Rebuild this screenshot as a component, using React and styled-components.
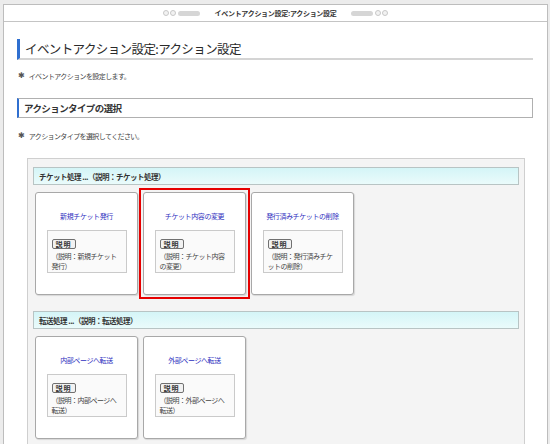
import React from 'react';
import styled, { createGlobalStyle } from 'styled-components';

const GlobalStyle = createGlobalStyle`
  html, body {
    margin: 0;
    padding: 0;
    background: #ececec;
    overflow: hidden;
  }
  body {
    font-family: "Noto Sans CJK JP", "Noto Sans", sans-serif;
    color: #333;
  }
`;

const Frame = styled.div`
  margin: 4px 0 0 3px;
  width: 543px;
  height: 460px;
  background: #fff;
  border: 1px solid #bdbdbd;
`;

const TopBar = styled.div`
  height: 16px;
  border-bottom: 1px solid #c4c4c4;
  display: flex;
  align-items: center;
  justify-content: center;
  gap: 14px;
`;

const TopTitle = styled.span`
  font-size: 7px;
  font-weight: 700;
  letter-spacing: -0.3px;
  color: #333;
`;

const Deco = styled.span`
  display: flex;
  align-items: center;
  gap: 1px;
  flex-direction: ${p => (p.$flip ? 'row-reverse' : 'row')};
`;

const Dot = styled.i`
  width: 4px;
  height: 4px;
  border-radius: 50%;
  border: 1px solid #c8c8c8;
  background: #f2f2f2;
`;

const Pill = styled.i`
  width: 22px;
  height: 5px;
  border-radius: 3px;
  background: #d6d6d6;
  margin: 0 1px;
`;

const Content = styled.div`
  padding: 0 14px 0 13px;
`;

const Heading = styled.h1`
  margin: 17px 0 0;
  height: 19px;
  display: flex;
  align-items: center;
  padding-left: 5px;
  border-left: 3px solid #2f6fd0;
  border-bottom: 2px solid #d4d4d4;
  font-size: 12.5px;
  font-weight: 400;
  letter-spacing: -0.6px;
  color: #2a2a2a;
`;

const Note = styled.p`
  margin: ${p => p.$top}px 0 0 1px;
  height: 10px;
  line-height: 10px;
  font-size: 7px;
  letter-spacing: -0.6px;
  color: #444;
  display: flex;
  align-items: center;
  gap: 4px;
`;

const Mark = styled.span`
  font-family: "DejaVu Sans", sans-serif;
  font-size: 8px;
  color: #555;
  letter-spacing: 0;
`;

const SectionBox = styled.div`
  margin-top: 17px;
  height: 18px;
  display: flex;
  align-items: center;
  padding-left: 5px;
  border: 1px solid #b0b0b0;
  border-left: 2px solid #2f6fd0;
  font-size: 9.5px;
  font-weight: 700;
  letter-spacing: -0.6px;
  color: #333;
`;

const Panel = styled.div`
  margin: 17px 8px 0 10px;
  padding: 8px 5px 30px;
  background: #f4f4f4;
  border: 1px solid #cfcfcf;
`;

const GroupHeader = styled.div`
  margin-top: ${p => p.$top}px;
  height: 16px;
  display: flex;
  align-items: center;
  padding-left: 5px;
  background: linear-gradient(#d4f5f7, #eafbfb);
  border: 1px solid #b8c4c4;
  font-size: 7.5px;
  font-weight: 700;
  letter-spacing: -0.5px;
  color: #333;
`;

const CardRow = styled.div`
  display: flex;
  gap: 5px;
  margin-top: 7px;
  padding-left: 2px;
`;

const Card = styled.div`
  position: relative;
  width: 101px;
  height: 101px;
  background: #fff;
  border: 1px solid #a8a8a8;
  border-radius: 3px;
  box-shadow: 1px 1px 1px rgba(0, 0, 0, 0.12);
  display: flex;
  flex-direction: column;
  align-items: center;

  &::after {
    content: '';
    display: ${p => (p.$selected ? 'block' : 'none')};
    position: absolute;
    inset: -5px;
    border: 2px solid #e60000;
    pointer-events: none;
  }
`;

const CardTitle = styled.div`
  margin-top: 18px;
  height: 10px;
  line-height: 10px;
  font-size: 7px;
  letter-spacing: -0.4px;
  color: #3030c0;
  white-space: nowrap;
`;

const DescBox = styled.div`
  margin-top: 9px;
  width: 80px;
  height: 43px;
  box-sizing: border-box;
  padding: 8px 3px 0 4px;
  background: #fafafa;
  border: 1px solid #cacaca;
  display: flex;
  flex-direction: column;
  align-items: flex-start;
`;

const DescButton = styled.span`
  display: flex;
  align-items: center;
  justify-content: center;
  width: 22px;
  height: 8px;
  border: 1px solid #707070;
  border-radius: 2px;
  background: #f2f2f2;
  font-size: 7px;
  line-height: 8px;
  font-weight: 700;
  letter-spacing: 1px;
  color: #333;
`;

const DescText = styled.div`
  margin-top: 2px;
  line-height: 10px;
  font-size: 7px;
  letter-spacing: -0.5px;
  color: #444;
`;

const groups = [
  {
    title: 'チケット処理 ...（説明：チケット処理）',
    items: [
      { name: '新規チケット発行', desc: '（説明：新規チケット発行）' },
      { name: 'チケット内容の変更', desc: '（説明：チケット内容の変更）', selected: true },
      { name: '発行済みチケットの削除', desc: '（説明：発行済みチケットの削除）' },
    ],
  },
  {
    title: '転送処理 ...（説明：転送処理）',
    items: [
      { name: '内部ページへ転送', desc: '（説明：内部ページへ転送）' },
      { name: '外部ページへ転送', desc: '（説明：外部ページへ転送）' },
    ],
  },
];

const Decoration = ({ flip }) => (
  <Deco $flip={flip}>
    <Dot />
    <Dot />
    <Pill />
  </Deco>
);

export default function App() {
  return (
    <>
      <GlobalStyle />
      <Frame>
        <TopBar>
          <Decoration />
          <TopTitle>イベントアクション設定:アクション設定</TopTitle>
          <Decoration flip />
        </TopBar>
        <Content>
          <Heading>イベントアクション設定:アクション設定</Heading>
          <Note $top={11}>
            <Mark>✱</Mark>イベントアクションを設定します。
          </Note>
          <SectionBox>アクションタイプの選択</SectionBox>
          <Note $top={13}>
            <Mark>✱</Mark>アクションタイプを選択してください。
          </Note>
          <Panel>
            {groups.map((g, gi) => (
              <React.Fragment key={g.title}>
                <GroupHeader $top={gi === 0 ? 0 : 16}>{g.title}</GroupHeader>
                <CardRow>
                  {g.items.map(item => (
                    <Card key={item.name} $selected={item.selected}>
                      <CardTitle>{item.name}</CardTitle>
                      <DescBox>
                        <DescButton>説明</DescButton>
                        <DescText>{item.desc}</DescText>
                      </DescBox>
                    </Card>
                  ))}
                </CardRow>
              </React.Fragment>
            ))}
          </Panel>
        </Content>
      </Frame>
    </>
  );
}
